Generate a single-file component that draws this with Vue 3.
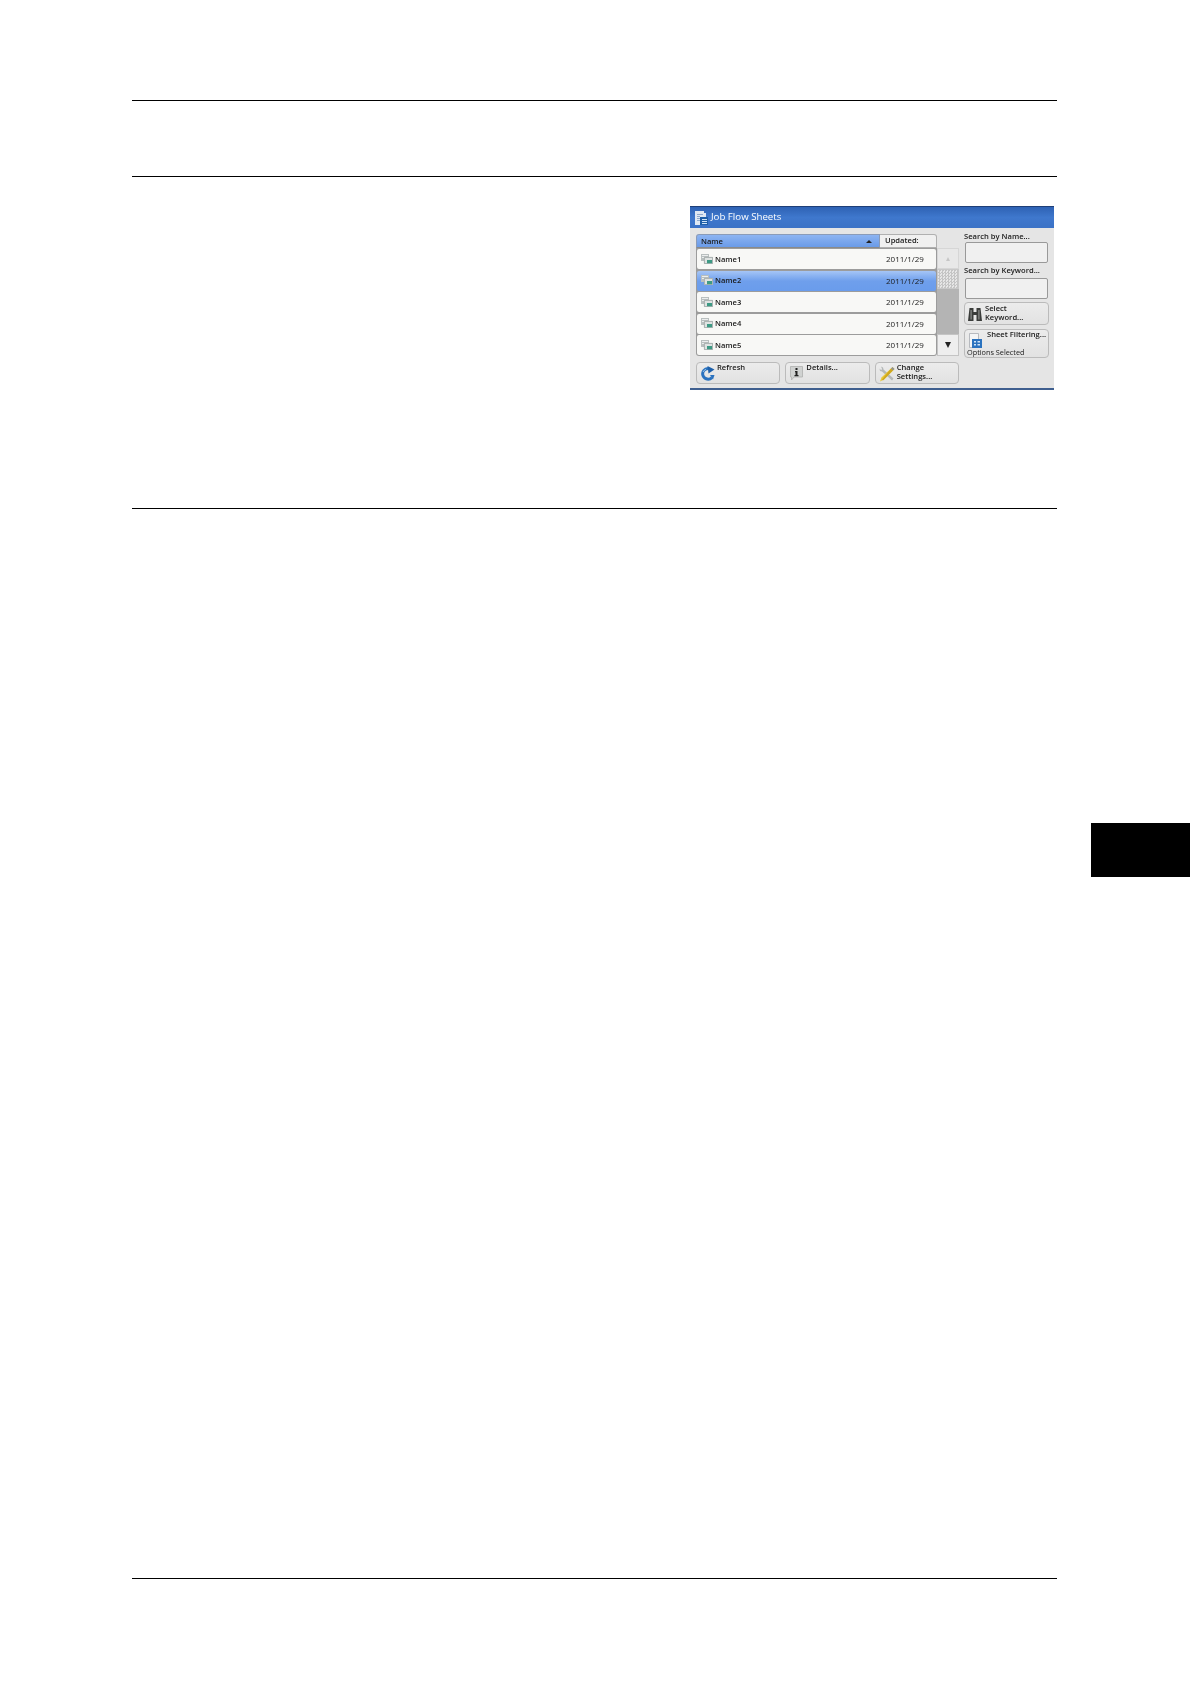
<script setup>
const rows = [
  { name: 'Name1', date: '2011/1/29' },
  { name: 'Name2', date: '2011/1/29', selected: true },
  { name: 'Name3', date: '2011/1/29' },
  { name: 'Name4', date: '2011/1/29' },
  { name: 'Name5', date: '2011/1/29' },
]
</script>

<template>
  <div class="page">
    <div class="rule first"></div>
    <div class="rule second"></div>

    <div class="content">
      <div class="panel">
        <div class="title-bar">
          <svg class="title-icon" viewBox="0 0 13 14" width="13" height="14">
            <path d="M0 0h9v2h2v12H0z" fill="#dfe8f3" />
            <path d="M2 3h6v1H2zM2 5h3v1H2zM2 7h3v1H2zM2 9h3v1H2z" fill="#8fa9cc" />
            <rect x="5" y="6" width="8" height="8" fill="#1f5fa8" />
            <path d="M7 8h5v1H7zM7 10h5v1H7zM7 12h5v1H7z" fill="#cfe2f6" />
          </svg>
          <span class="title-text">Job Flow Sheets</span>
        </div>

        <div class="body">
          <div class="left">
            <div class="list-area">
              <div class="table">
                <div class="table-head">
                  <div class="head-name">
                    <span>Name</span>
                    <i class="sort-up"></i>
                  </div>
                  <div class="head-date">Updated:</div>
                </div>
                <div class="table-rows">
                  <div v-for="row in rows" :key="row.name" class="row" :class="{ selected: row.selected }">
                    <svg class="row-icon" viewBox="0 0 12 10" width="12" height="10">
                      <path d="M0 0h8v7H0z" fill="#b9bfbf" />
                      <path d="M1 1h6v1H1zM1 3h3v1H1z" fill="#eceeee" />
                      <path d="M3 3h9v7H3z" fill="#dfe3e2" />
                      <path d="M3.400 3.400h8.200v6.200H3.400z" fill="none" stroke="#8f9898" stroke-width="0.7" />
                      <rect x="6" y="6" width="5" height="3.200" fill="#3d9a84" />
                    </svg>
                    <span class="row-name">{{ row.name }}</span>
                    <span class="row-date">{{ row.date }}</span>
                  </div>
                </div>
              </div>
              <div class="scrollbar">
                <div class="scroll-btn up"><i class="tri-up"></i></div>
                <div class="scroll-thumb"></div>
                <div class="scroll-track"></div>
                <div class="scroll-btn down"><i class="tri-down"></i></div>
              </div>
            </div>

            <div class="bottom-buttons">
              <div class="btn">
                <svg class="btn-icon" viewBox="0 0 15 15" width="15" height="15">
                  <path d="M12 11.500A5.400 5.400 0 1 1 8.500 2.400" fill="none" stroke="#2a72bf" stroke-width="3" />
                  <path d="M3 6a4.600 4.600 0 0 1 3-2.600" fill="none" stroke="#9cc6ec" stroke-width="1" />
                  <path d="M7.500 0L14.500 3.500 8.500 7.500z" fill="#1e60aa" />
                  <path d="M10 9L14.500 9 13 13.500z" fill="#2a72bf" />
                </svg>
                <span class="btn-text">Refresh</span>
              </div>
              <div class="btn">
                <svg class="btn-icon" viewBox="0 0 15 15" width="15" height="15">
                  <path d="M1.500 0.500h12v10.500H5L2.500 14v-3h-1z" fill="#d0d2d1" stroke="#aeb0af" stroke-width="0.8" />
                  <rect x="6.500" y="2" width="2" height="2" fill="#222" />
                  <path d="M6 5h2.500v4h1v1.200H5.500V9h1V6.200H6z" fill="#222" />
                </svg>
                <span class="btn-text">Details...</span>
              </div>
              <div class="btn">
                <svg class="btn-icon" viewBox="0 0 16 16" width="16" height="16">
                  <path d="M2 0.500l2 1 0.500 2 10 9-1.500 2-10-9-2-.5-.5-2.500 1.500 1.500 1.200-.8z" fill="#b4b8b8" />
                  <path d="M13.500 1L15.500 3 5 13.500l-4 2 1.500-4z" fill="#e8c838" />
                  <path d="M12 2.500L14 4.500 4 14.500l-1-1z" fill="#cfa820" />
                  <path d="M13.500 1L15.500 3 14 4.500 12 2.500z" fill="#8f9292" />
                </svg>
                <span class="btn-text">Change<br />Settings...</span>
              </div>
            </div>
          </div>

          <div class="right">
            <div class="field-label">Search by Name...</div>
            <div class="input"></div>
            <div class="field-label second-label">Search by Keyword...</div>
            <div class="input"></div>
            <div class="btn keyword-btn">
              <svg class="side-icon" viewBox="0 0 14 14" width="14" height="14">
                <path d="M1.500 1h4v4h3V1h4l1.500 13H8.500V8h-3v6H0z" fill="#3a3c3a" />
                <path d="M2.500 3h1.200v9.500H2.500zM10.300 3h1.200v9.500h-1.200z" fill="#8d8f8d" />
              </svg>
              <span class="btn-text">Select<br />Keyword...</span>
            </div>
            <div class="btn filter-btn">
              <div class="filter-top">
                <svg class="side-icon filter-icon" viewBox="0 0 14 15" width="14" height="15">
                  <path d="M0.500 0.500h9v14h-9z" fill="#f4f5f6" stroke="#a8acb2" stroke-width="0.8" />
                  <rect x="3" y="6" width="10" height="9" fill="#2a72bf" />
                  <path d="M5 8h2v1.500H5zM8.500 8H11v1.500H8.500zM5 11h2v1.500H5zM8.500 11H11v1.500H8.500z" fill="#cfe4f7" />
                </svg>
                <span class="btn-text filter-text">Sheet Filtering...</span>
              </div>
              <div class="filter-sub">Options Selected</div>
            </div>
          </div>
        </div>
      </div>
    </div>

    <div class="rule third"></div>
    <div class="chapter-tab"></div>
    <div class="rule last"></div>
  </div>
</template>

<style>
html,
body {
  margin: 0;
  background: #fff;
}
</style>

<style scoped>
/* #3a6fc4 title blue, #e4e4e4 panel grey, #6f9fec selected blue */
.page {
  width: 1190px;
  height: 1684px;
  padding-top: 100px;
  box-sizing: border-box;
  background: #fff;
  font-family: "Open Sans", "Liberation Sans", sans-serif;
  color: #1a1a1a;
  overflow: hidden;
}

.rule {
  height: 1px;
  margin-left: 132px;
  width: 925px;
  background: #000;
}

.second {
  margin-top: 75px;
}

.content {
  height: 331px;
  padding-top: 29px;
  padding-left: 690px;
  box-sizing: border-box;
}

.chapter-tab {
  width: 99px;
  height: 54px;
  margin-top: 314px;
  margin-left: 1091px;
  background: #000;
}

.last {
  margin-top: 701px;
}

.panel {
  width: 364px;
  height: 184px;
  background: #e5e5e5;
  border-bottom: 2px solid #3f5f8f;
  box-sizing: border-box;
  display: flex;
  flex-direction: column;
  filter: blur(0.45px);
}

.title-bar {
  height: 22px;
  background: linear-gradient(#2e62b4, #3f78cd 50%, #3b72c6);
  border-top: 1px solid #1f3f78;
  box-sizing: border-box;
  display: flex;
  align-items: center;
  padding-left: 5px;
  gap: 3px;
  color: #fff;
  font-size: 9.700px;
}

.title-icon {
  flex: none;
}

.title-text {
  padding-bottom: 2px;
}

.body {
  flex: 1;
  display: flex;
  padding: 6px 0 0 6px;
  gap: 5px;
}

.left {
  width: 263px;
}

.list-area {
  display: flex;
  height: 122px;
}

.table {
  width: 241px;
}

.table-head {
  display: flex;
  height: 14px;
  font-size: 7.600px;
  font-weight: 600;
  line-height: 11px;
}

.head-name {
  width: 184px;
  background: linear-gradient(#8db4f2, #6a9be8);
  border: 1px solid #8a9bb8;
  border-bottom-color: #8a8a8a;
  border-radius: 3px 0 0 0;
  box-sizing: border-box;
  display: flex;
  align-items: center;
  justify-content: space-between;
  padding: 0 7px 0 4px;
}

.head-date {
  flex: 1;
  background: #f0f0f0;
  border: 1px solid #b0b0b0;
  border-left: none;
  border-radius: 0 3px 0 0;
  box-sizing: border-box;
  padding-left: 5px;
}

.sort-up {
  width: 0;
  height: 0;
  border-left: 3px solid transparent;
  border-right: 3px solid transparent;
  border-bottom: 3px solid #222;
}

.table-rows {
  height: 108px;
  background: #9c9c9c;
  padding: 1px;
  box-sizing: border-box;
  display: flex;
  flex-direction: column;
  gap: 1.500px;
  border-radius: 0 0 3px 3px;
}

.row {
  flex: 1;
  display: flex;
  align-items: center;
  background: #f8f8f6;
  border-radius: 2px;
  font-size: 7.600px;
  font-weight: 600;
  padding: 0 0 1px 4px;
}

.row.selected {
  background: linear-gradient(#a5c5f6, #6f9fec 50%, #6a9cec);
}

.row-icon {
  flex: none;
}

.row-name {
  margin-left: 2px;
  flex: 1;
}

.row-date {
  width: 50px;
  font-size: 8px;
  font-weight: 400;
}

.scrollbar {
  width: 22px;
  margin-top: 14px;
  display: flex;
  flex-direction: column;
}

.scroll-btn {
  background: #e8e8e8;
  border: 1px solid #d6d6d6;
  box-sizing: border-box;
  display: flex;
  align-items: center;
  justify-content: center;
}

.scroll-btn.up {
  height: 21px;
}

.scroll-btn.down {
  height: 22px;
  border-color: #c4c4c4;
  background: #eeeeee;
}

.scroll-thumb {
  height: 20px;
  background: repeating-conic-gradient(#c4c4c4 0 25%, #e6e6e6 0 50%) 0 0 / 3px 3px;
  border: 1px solid #c8c8c8;
  box-sizing: border-box;
}

.scroll-track {
  flex: 1;
  background: #b4b4b4;
}

.tri-up {
  width: 0;
  height: 0;
  border-left: 2.500px solid transparent;
  border-right: 2.500px solid transparent;
  border-bottom: 4px solid #c6c6c6;
}

.tri-down {
  width: 0;
  height: 0;
  border-left: 3px solid transparent;
  border-right: 3px solid transparent;
  border-top: 6px solid #222;
}

.bottom-buttons {
  display: flex;
  gap: 5px;
  margin-top: 6px;
}

.btn {
  background: linear-gradient(#ececec, #e2e2e2);
  border: 1px solid #bbbbbb;
  border-radius: 4px;
  box-sizing: border-box;
  font-size: 7.600px;
  font-weight: 600;
  line-height: 9px;
}

.bottom-buttons .btn {
  flex: 1;
  height: 22px;
  display: flex;
  padding: 0 3px;
  gap: 2px;
}

.btn-icon {
  flex: none;
  margin-top: 3px;
}

.right {
  width: 85px;
  display: flex;
  flex-direction: column;
  font-size: 7.600px;
  font-weight: 600;
}

.field-label {
  height: 9px;
  line-height: 9px;
  white-space: nowrap;
  margin-top: -2px;
}

.second-label {
  margin-top: 3px;
  margin-bottom: 2px;
}

.input {
  width: 83px;
  height: 21px;
  margin-top: 1px;
  margin-left: 1px;
  background: #f0f0f0;
  border: 1px solid #999;
  border-radius: 2px;
  box-sizing: border-box;
}

.keyword-btn {
  height: 23px;
  margin-top: 3px;
  display: flex;
  align-items: center;
  padding: 0 0 2px 3px;
  gap: 3px;
}

.keyword-btn .side-icon {
  margin-top: 2px;
}

.filter-btn {
  height: 29px;
  margin-top: 4px;
  padding: 0 0 0 2px;
}

.filter-top {
  display: flex;
  gap: 4px;
  height: 18px;
}

.filter-icon {
  margin: 3px 0 0 2px;
}

.filter-text {
  white-space: nowrap;
  padding-top: 0;
}

.filter-sub {
  white-space: nowrap;
  margin-top: 0;
  font-size: 7.300px;
  font-weight: 400;
}

.side-icon {
  flex: none;
}
</style>
